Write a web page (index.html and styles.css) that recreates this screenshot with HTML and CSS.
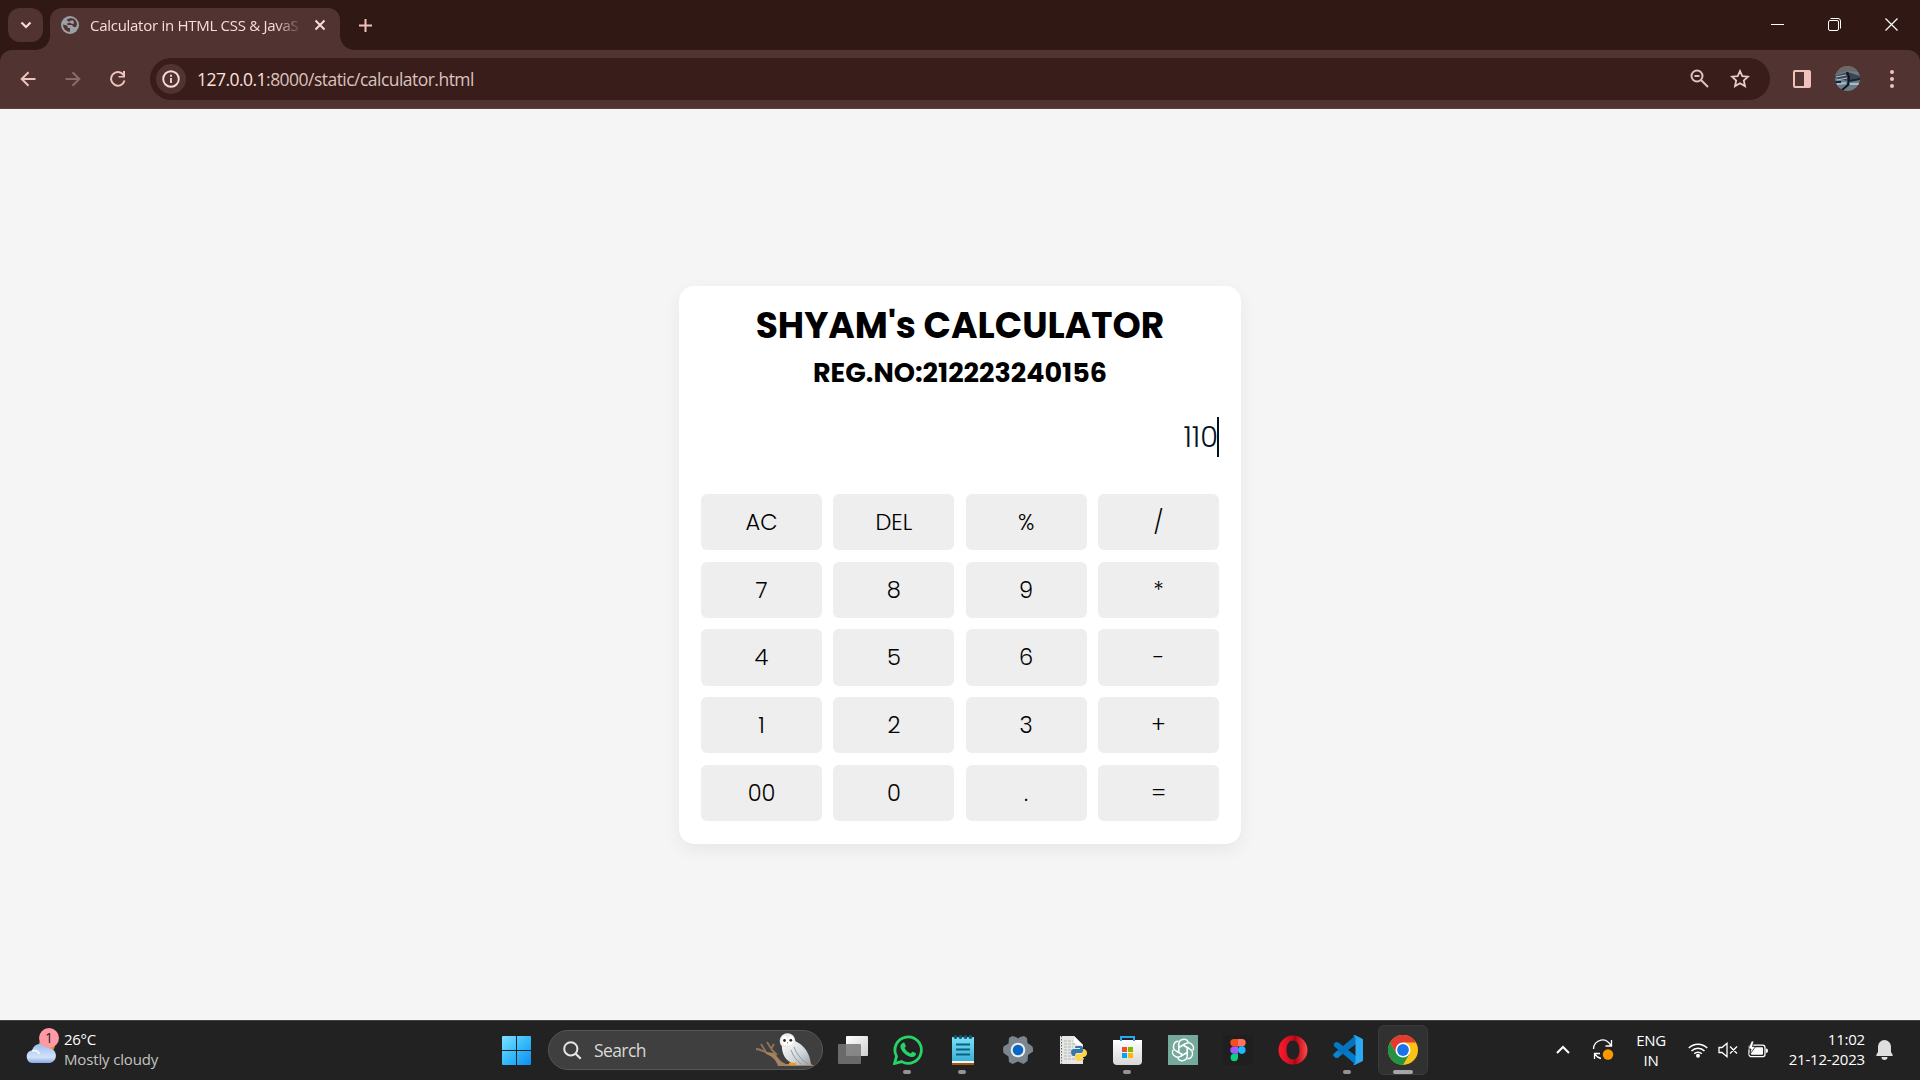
FILE: index.html
```html
<!DOCTYPE html>
<html lang="en">
<head>
<meta charset="utf-8">
<title>Calculator in HTML CSS &amp; JavaScript</title>
<link rel="stylesheet" href="styles.css">
</head>
<body>
<header class="browser">
  <div class="tabstrip">
    <div class="tab-search"><svg width="12" height="8" viewBox="0 0 12 8"><path d="M1.5 1.5 6 6l4.500-4.500" fill="none" stroke="#f8dcd8" stroke-width="2.200"/></svg></div>
    <div class="tab">
      <svg class="globe" width="18" height="18" viewBox="0 0 18 18"><circle cx="9" cy="9" r="9" fill="#9aa0a6"/><path d="M2 8.500 6 9.500 7 12 9 12v3.800C5 15.800 2 12.500 2 8.500ZM5.500 4C7 2.500 9.500 2 11.500 2.500L11 4.500 8.500 5v2L6 7.200 6.500 9h4.500l1.500 2H15l1-2.500C16 5 13.500 2.600 11.500 2.200L11 4l1.500 1 .5 2.500-2 .5" fill="#513431"/></svg>
      <span class="tab-title">Calculator in HTML CSS &amp; JavaS</span>
      <svg class="tab-close" width="12" height="12" viewBox="0 0 12 12"><path d="M1.500 1.500l9 9M10.500 1.500l-9 9" stroke="#f8dcd8" stroke-width="2"/></svg>
    </div>
    <svg class="new-tab" width="13" height="13" viewBox="0 0 13 13"><path d="M6.500 0v13M0 6.500h13" stroke="#efc2bc" stroke-width="2"/></svg>
    <div class="window-controls">
      <svg width="13" height="13" viewBox="0 0 13 13"><path d="M0 6.500h13" stroke="#fff"/></svg>
      <svg width="13" height="13" viewBox="0 0 13 13"><rect x=".5" y="2.500" width="10" height="10" rx="1.500" fill="none" stroke="#fff"/><path d="M2.500.5H10a2.500 2.500 0 0 1 2.500 2.500v7.500" fill="none" stroke="#fff"/></svg>
      <svg width="13" height="13" viewBox="0 0 13 13"><path d="M.5.5l12 12M12.500.5l-12 12" stroke="#fff" stroke-width="1.200"/></svg>
    </div>
  </div>
  <div class="toolbar">
    <nav class="nav">
      <svg width="16" height="16" viewBox="0 0 16 16"><path d="M15.500 8H2M8.500 1.200 1.700 8l6.800 6.800" fill="none" stroke="#efc2bc" stroke-width="2"/></svg>
      <svg width="16" height="16" viewBox="0 0 16 16"><path d="M.5 8H14M7.500 1.200 14.300 8l-6.800 6.800" fill="none" stroke="#8c6b67" stroke-width="2"/></svg>
      <svg width="16" height="16" viewBox="0 0 16 16"><path d="M14.500 9.500A6.800 6.800 0 1 1 13.500 4" fill="none" stroke="#efc2bc" stroke-width="2"/><path d="M15 0v6.500H8.500V5H13V0Z" fill="#efc2bc"/></svg>
    </nav>
    <div class="address">
      <div class="site-info"><svg width="18" height="18" viewBox="0 0 18 18"><circle cx="9" cy="9" r="7.800" fill="none" stroke="#f8dcd8" stroke-width="1.900"/><path d="M9 8v5M9 4.700v2" stroke="#f8dcd8" stroke-width="1.800"/></svg></div>
      <span class="url"><b>127.0.0.1</b>:8000/static/calculator.html</span>
      <svg class="zoom" width="19" height="19" viewBox="0 0 19 19"><circle cx="7" cy="7" r="5.500" fill="none" stroke="#dcc3bf" stroke-width="2"/><path d="M4.500 7h5M11 11l7 7" stroke="#dcc3bf" stroke-width="2"/></svg>
      <svg width="20" height="19" viewBox="0 0 20 19"><path d="M10 2l2.300 5.100 5.700.6-4.200 3.800 1.200 5.600-5-2.900-5 2.900 1.200-5.600L2 7.700l5.700-.6Z" fill="none" stroke="#e6ccc8" stroke-width="1.800"/></svg>
    </div>
    <svg class="panel" width="18" height="18" viewBox="0 0 18 18"><path fill-rule="evenodd" d="M2 0h14a2 2 0 0 1 2 2v14a2 2 0 0 1-2 2H2a2 2 0 0 1-2-2V2a2 2 0 0 1 2-2Zm0 2v14h9V2Z" fill="#efc2bc"/></svg>
    <svg class="avatar" width="25" height="25" viewBox="0 0 25 25"><defs><clipPath id="face"><circle cx="12.500" cy="12.500" r="12.500"/></clipPath></defs><g clip-path="url(#face)"><path fill="#6d7c89" d="M0 0h25v25H0z"/><path fill="#6b6865" d="M0 0h25v6L12 5 0 9z"/><path d="M0 10 13 6l12 4v3l-12 2-13-3Z" fill="#3b4652"/><path d="M1 11l10-2M2 14l10-2" stroke="#b4c2cd"/><path d="M12 6l2 5-1 8-6 5" fill="none" stroke="#0c1625" stroke-width="2"/><path d="M2 18l9-1M15 18h9" stroke="#a6bdca" stroke-width="2"/><path d="M14 15l11-2M0 16h6" stroke="#162330" stroke-width="2"/></g></svg>
    <svg width="4" height="18" viewBox="0 0 4 18"><g fill="#efc2bc"><circle cx="2" cy="2" r="2"/><circle cx="2" cy="9" r="2"/><circle cx="2" cy="16" r="2"/></g></svg>
  </div>
</header>

<main class="page">
  <section class="calculator">
    <h1>SHYAM's CALCULATOR</h1>
    <h2>REG.NO:212223240156</h2>
    <div class="display"><span class="value">110</span><span class="caret"></span></div>
    <div class="buttons">
      <button>AC</button><button>DEL</button><button>%</button><button>/</button>
      <button>7</button><button>8</button><button>9</button><button>*</button>
      <button>4</button><button>5</button><button>6</button><button>-</button>
      <button>1</button><button>2</button><button>3</button><button>+</button>
      <button>00</button><button>0</button><button>.</button><button>=</button>
    </div>
  </section>
</main>

<footer class="taskbar">
  <div class="weather">
    <svg width="36" height="38" viewBox="0 0 36 38"><defs><linearGradient id="cloud" x2="0" y2="1"><stop offset="0" stop-color="#9cbcf0"/><stop offset=".7" stop-color="#d3e2f9"/><stop offset="1" stop-color="#86a9e8"/></linearGradient></defs><circle cx="22" cy="18" r="8" fill="#f18a1b"/><path d="M7 36a6.500 6.500 0 0 1-1-12.500h1A9.500 9.500 0 0 1 24 21a7.600 7.600 0 0 1 1 15Z" fill="url(#cloud)"/><path d="M7 24c3-1 6 0 7.500 3" fill="none" stroke="#edf4ff" stroke-width="2"/><circle cx="24" cy="11" r="10" fill="#ff99a4"/></svg>
    <span class="badge">1</span>
    <div class="weather-text"><span class="temp">26°C</span><span class="sky">Mostly cloudy</span></div>
  </div>
  <div class="apps">
    <svg class="start" width="29" height="29" viewBox="0 0 29 29"><defs><linearGradient id="win" x2="1" y2="1"><stop offset="0" stop-color="#7fe0ff"/><stop offset=".5" stop-color="#36bbfb"/><stop offset="1" stop-color="#0d8df2"/></linearGradient></defs><path fill="url(#win)" d="M1 0h13v14H0V1a1 1 0 0 1 1-1ZM15 0h13a1 1 0 0 1 1 1v13H15ZM0 15h14v14H1a1 1 0 0 1-1-1ZM15 15h14v13a1 1 0 0 1-1 1H15Z"/></svg>
    <div class="search">
      <svg width="19" height="19" viewBox="0 0 19 19"><circle cx="7.800" cy="7.800" r="6.600" fill="none" stroke="#e5e5e5" stroke-width="2"/><path d="M12.700 12.700l5 5" stroke="#e5e5e5" stroke-width="2.300"/></svg>
      <span>Search</span>
      <svg class="owl" width="60" height="36" viewBox="0 0 60 36"><defs><linearGradient id="feather" x2="1" y2="1"><stop offset="0" stop-color="#fff"/><stop offset=".6" stop-color="#cfd5d8"/><stop offset="1" stop-color="#98a1a8"/></linearGradient></defs><path d="M1 17c5 0 8 3 13 5M6 12l5 8M12 10l5 8 5 5M19 12l-3 5" fill="none" stroke="#97755a" stroke-width="1.800"/><path d="M11 20l8 1c4 4 6 9 12 11l24-1 4 3H23c-2-6-6-10-12-12Z" fill="#a58360"/><path d="M27 12c-1 10 4 18 14 21h15C55 21 49 13 40 9Z" fill="url(#feather)"/><path d="M39 15c3 8 8 13 14 17M36 18c2 6 6 11 10 14" fill="none" stroke="#8b949b" stroke-width=".9"/><circle cx="32.500" cy="9" r="7.800" fill="#eeece9"/><path d="M32.500 13C27 14 25 8 28 4c3-1 4 1 4.500 3 1-3 3-4 5-3 3 5 0 10-5 9Z" fill="#fff"/><circle cx="29.500" cy="8.500" r="1.400" fill="#33251f"/><circle cx="35.800" cy="8.300" r="1.400" fill="#33251f"/><path d="M32 10l1 0-.5 2.500Z" fill="#9b785f"/><path d="M34 32h7" stroke="#f5941f" stroke-width="2.500"/></svg>
    </div>
    <div class="slot"><svg width="30" height="30" viewBox="0 0 30 30"><defs><linearGradient id="tv" x2="1" y2="1"><stop offset="0" stop-color="#fff"/><stop offset="1" stop-color="#cfcfcf"/></linearGradient></defs><rect x="8" y="1" width="22" height="20" rx="1" fill="url(#tv)"/><rect x="0" y="9" width="23" height="20" rx="1" fill="#777" fill-opacity=".85"/></svg></div>
    <div class="slot open"><svg width="30" height="30" viewBox="0 0 30 30"><path d="M1.500 28.500l2-7.200A13.200 13.200 0 1 1 8.700 26.600Z" fill="none" stroke="#25d366" stroke-width="2.800"/><path d="M10 7.800c.8-.4 1.500-.2 1.800.6l1 2.500c.2.700-.9 1.500-1.200 2 1.500 2.800 3.500 4.500 6 5.500.8-.4 1.500-2 2.200-1.700l2.800 1.400c.8.500.2 2.300-.8 3.200-2 1.600-5.500.6-8.800-1.600-3-2.100-5.400-5.400-5.600-8 0-1.700 1-3.200 2.600-3.900Z" fill="#25d366"/></svg></div>
    <div class="slot open"><svg width="22" height="30" viewBox="0 0 22 30"><defs><linearGradient id="note" x2="0" y2="1"><stop offset="0" stop-color="#7be0f6"/><stop offset="1" stop-color="#3bb2d6"/></linearGradient></defs><path fill="#a65410" d="M0 24h22v6H0z"/><path fill="#f3f3f3" d="M0 22h22v6H0z"/><path fill="url(#note)" d="M0 2h22v24H0z"/><g fill="#0c5773"><circle cx="3.500" cy="2" r="1.900"/><circle cx="8.500" cy="2" r="1.900"/><circle cx="13.500" cy="2" r="1.900"/><circle cx="18.500" cy="2" r="1.900"/></g><path d="M4 9.500h14M4 14.500h14M4 19.500h14" stroke="#0d5e80" stroke-width="2"/></svg></div>
    <div class="slot"><svg width="30" height="30" viewBox="0 0 30 30"><path d="M9 1l4 1 2 1.500L17 2l4-1 3 2 .5 5 5 3.500.5 2.500v2.500l-5 3.500-.5 6-4 3-5.500-2.500L9.500 29 6 27l-.5-5.500L.5 18 0 14l.5-2.500 5-3L6 3Z" fill="#7b858e"/><circle cx="15" cy="15" r="7.300" fill="#eceff1"/><circle cx="15" cy="15" r="5.300" fill="#0a66c2"/></svg></div>
    <div class="slot"><svg width="30" height="30" viewBox="0 0 30 30"><path d="M2 1h14l9 9v19H2Z" fill="#e6e6e4"/><path d="M16 1l9 9h-6l-3-3Z" fill="#fff"/><path d="M6 6h9M6 9h11M6 12h9M6 15h7M6 18h8M6 21h8M6 24h11" stroke="#b4b4b4" stroke-dasharray="3 1"/><path d="M3.500 1v28" stroke="#666" stroke-dasharray="1.500 1.500"/><path d="M18 11h5q2 0 2 2v3q0 2-2 2h-4q-2 0-2 3h-2q-2-1-2-4t3-3h6v-1h-5q0-2 1-2Z" fill="#3776ab"/><path d="M25 14h1q3 1 3 4t-3 4h-4v1h4q0 3-4 3t-5-3v-2q0-2 2-2h4q2 0 2-3Z" fill="#ffd343"/></svg></div>
    <div class="slot open"><svg width="30" height="30" viewBox="0 0 30 30"><defs><linearGradient id="bag" x2="0" y2="1"><stop offset="0" stop-color="#fff"/><stop offset="1" stop-color="#d7d7d7"/></linearGradient></defs><path d="M0 5h29v21q0 4-4 4H4q-4 0-4-4Z" fill="url(#bag)"/><path d="M8 6V2h13v4" fill="none" stroke="#27a9ea" stroke-width="2"/><path fill="#f25022" d="M9 12h5v5H9z"/><path fill="#7fba00" d="M15 12h5v5h-5z"/><path fill="#00a4ef" d="M9 18h5v5H9z"/><path fill="#ffb900" d="M15 18h5v5h-5z"/></svg></div>
    <div class="slot"><svg width="30" height="30" viewBox="0 0 30 30"><path fill="#74a99b" d="M0 0h30v30H0z"/><g transform="translate(15 15)" fill="none" stroke="#fff" stroke-width="1.400"><path id="petal" d="M-4.300 2.500V-5.500C-4.300-11 3-12.500 5.300-8.200M-4.300-2.500 2.500-6.500"/><use href="#petal" transform="rotate(60)"/><use href="#petal" transform="rotate(120)"/><use href="#petal" transform="rotate(180)"/><use href="#petal" transform="rotate(240)"/><use href="#petal" transform="rotate(300)"/></g></svg></div>
    <div class="slot"><svg width="30" height="30" viewBox="0 0 30 30"><path fill="#1f1f1f" d="M0 0h30v30H0z"/><path d="M15 4h-4a3.700 3.700 0 0 0 0 7.400h4Z" fill="#f24e1e"/><path d="M15 4h4a3.700 3.700 0 0 1 0 7.400h-4Z" fill="#ff7262"/><path d="M15 11.400h-4a3.700 3.700 0 0 0 0 7.400h4Z" fill="#a259ff"/><circle cx="18.800" cy="15.100" r="3.800" fill="#1abcfe"/><path d="M15 18.800h-4a3.700 3.700 0 1 0 4 3.700Z" fill="#0acf83"/></svg></div>
    <div class="slot"><svg width="30" height="30" viewBox="0 0 30 30"><defs><linearGradient id="opera" x2="1"><stop offset="0" stop-color="#ff1b2d"/><stop offset=".5" stop-color="#c30d1e"/><stop offset=".55" stop-color="#b00010"/><stop offset="1" stop-color="#ff4a4a"/></linearGradient></defs><path fill-rule="evenodd" d="M15 .5a14.500 14.500 0 1 1 0 29 14.500 14.500 0 0 1 0-29Zm0 5c-4.500 0-6.500 4.500-6.500 9.500s2 9.500 6.500 9.500 6.500-4.500 6.500-9.500-2-9.500-6.500-9.500Z" fill="url(#opera)"/></svg></div>
    <div class="slot open"><svg width="30" height="30" viewBox="0 0 30 30"><path d="M1 8.500 3 7l2 .2L23 21v9L.8 11Z" fill="#007acc"/><path d="M23 0v9L5 22.800 3 23l-2.300-1.700V19Z" fill="#0873bb"/><path d="M0 19.500 4.500 15.500 8 18.500 5 22.800H3L.7 21Z" fill="#0b83d1"/><path d="M21.500 0 29 3.500q1 .5 1 1.500v20q0 1-1 1.500L21.500 30 20 29q2.500 0 2.500-2V3q0-2-2.500-2Z" fill="#2aaaf0"/></svg></div>
    <div class="slot active"><svg width="30" height="30" viewBox="0 0 30 30"><circle cx="15" cy="15" r="15" fill="#fbc116"/><path d="M2 7.500A15 15 0 0 1 28 7.500H15L8.500 18.800Z" fill="#e33b2e"/><path d="M2 7.500A15 15 0 0 0 15 30l6.500-11.300L8.500 18.800Z" fill="#229342"/><circle cx="15" cy="15" r="7.500" fill="#fff"/><circle cx="15" cy="15" r="5.900" fill="#1a73e8"/></svg></div>
  </div>
  <div class="tray">
    <svg class="chevron" width="14" height="9" viewBox="0 0 14 9"><path d="M1 8l6-6 6 6" fill="none" stroke="#fff" stroke-width="2"/></svg>
    <svg class="update" width="22" height="22" viewBox="0 0 22 22"><g fill="none" stroke="#fff" stroke-width="1.300"><path d="M1.500 10a9 9 0 0 1 17.500-3M19.500 1v6h-6M9 19.500a9 9 0 0 1-6-4.500M8 14.500H2.500V20"/></g><circle cx="16" cy="15.500" r="5.200" fill="#ff9800"/></svg>
    <div class="lang"><span>ENG</span><span>IN</span></div>
    <div class="status">
      <svg width="20" height="16" viewBox="0 0 20 16"><g fill="none" stroke="#fff" stroke-width="1.500"><path d="M.8 6a13 13 0 0 1 18.400 0M3.500 9a9 9 0 0 1 13 0M6.200 11.800a5.300 5.300 0 0 1 7.600 0"/></g><circle cx="10" cy="13.800" r="2" fill="#fff"/></svg>
      <svg width="20" height="16" viewBox="0 0 20 16"><path d="M1 5.500h3L9 1.300v13.400L4 10.500H1ZM12 4.500l7 7M19 4.500l-7 7" fill="none" stroke="#fff" stroke-width="1.300"/></svg>
      <svg width="20" height="18" viewBox="0 0 20 18"><rect x="1" y="4.200" width="16" height="11.500" rx="2.500" fill="none" stroke="#fff" stroke-width="1.300"/><path d="M18 7.500q2 0 2 2.200T18 12Z" fill="#fff"/><rect x="3" y="6.200" width="12" height="7.500" rx="1" fill="#fff"/><path d="M3.500 0 0 8h3L1.800 13.500 7.500 5.500H4.500L6 0Z" fill="#fff" stroke="#222" stroke-width=".8"/></svg>
    </div>
    <div class="clock"><span>11:02</span><span>21-12-2023</span></div>
    <svg class="bell" width="17" height="20" viewBox="0 0 17 20"><path d="M8.500 0a6.500 6.500 0 0 1 6.500 6.500V12l1.800 3q.3 1-1 1H1.200q-1.300 0-1-1L2 12V6.500A6.500 6.500 0 0 1 8.500 0ZM5.500 17h6a3 3 0 0 1-6 0Z" fill="#dedede"/></svg>
  </div>
</footer>
</body>
</html>
```
FILE: styles.css
```css
* { box-sizing: border-box; margin: 0; padding: 0; }
body {
  width: 1920px; height: 1080px; overflow: hidden;
  display: flex; flex-direction: column;
  background: #f5f5f5;
  font-family: "Segoe UI", "Open Sans", "Noto Sans", sans-serif;
}
svg { display: block; flex: none; }

/* browser window */
.browser { height: 109px; background: #301915; flex: none; }
.tabstrip { height: 50px; display: flex; align-items: center; padding-left: 8px; }
.tab-search {
  width: 35px; height: 34px; border-radius: 12px; background: #513431;
  display: flex; align-items: center; justify-content: center;
}
.tab {
  position: relative; width: 290px; height: 42px; margin-left: 7px; align-self: flex-end;
  padding: 0 14px 8px 11px; display: flex; align-items: center;
  background: #513431; border-radius: 12px 12px 0 0;
}
.tab::before, .tab::after {
  content: ""; position: absolute; bottom: 0; width: 14px; height: 14px;
}
.tab::before { left: -14px; background: radial-gradient(circle at 0 0, transparent 13.500px, #513431 14px); }
.tab::after { right: -14px; background: radial-gradient(circle at 100% 0, transparent 13.500px, #513431 14px); }
.tab-title {
  width: 214px; margin-left: 11px; white-space: nowrap;
  font-size: 15px; line-height: 24px; letter-spacing: -0.28px; color: #f8dcd8;
  -webkit-mask-image: linear-gradient(90deg, #000 185px, transparent 213px);
  mask-image: linear-gradient(90deg, #000 185px, transparent 213px);
}
.tab-close { margin-left: auto; }
.new-tab { margin-left: 19px; }
.window-controls { margin-left: auto; margin-right: 22px; padding-bottom: 1px; display: flex; gap: 44px; }
.toolbar {
  height: 59px; padding: 0 25px 1px 20px; display: flex; align-items: center;
  background: #513431; border-bottom: 1px solid #5b403c; border-radius: 12px 12px 0 0;
}
.nav { display: flex; gap: 29px; width: 130px; }
.address {
  width: 1620px; height: 42px; padding: 0 20px 0 6px; border-radius: 21px;
  display: flex; align-items: center; background: #381d1a;
}
.site-info {
  width: 30px; height: 30px; border-radius: 50%; background: #513431;
  display: flex; align-items: center; justify-content: center;
}
.url { margin-left: 11px; font-size: 17.5px; letter-spacing: -0.53px; color: #dcc3bf; }
.url b { font-weight: 400; color: #fde2de; }
.zoom { margin-left: auto; margin-right: 21px; }
.panel { margin-left: 23px; margin-right: 24px; }
.avatar { margin-right: 30px; }

/* calculator */
.page { height: 911px; display: flex; justify-content: center; padding-top: 177px; flex: none; }
.calculator {
  width: 562px; height: 558px; padding: 13px 22px 22px;
  background: #fff; border-radius: 15px; box-shadow: 0 6px 18px rgba(0, 0, 0, 0.06);
  font-family: Poppins, Inter, sans-serif; color: #000;
}
.calculator h1 { text-align: center; font-size: 36px; line-height: 54px; font-weight: 700; white-space: nowrap; }
.calculator h2 { text-align: center; font-size: 27px; line-height: 39px; font-weight: 700; white-space: nowrap; }
.display { height: 90px; margin-bottom: 12px; display: flex; align-items: center; justify-content: flex-end; }
.value { font-size: 28.8px; font-weight: 300; color: #02131f; padding-top: 1px; }
.caret { width: 2px; height: 40px; margin-left: -1px; background: #02131f; }
.buttons { display: grid; grid-template-columns: repeat(4, 1fr); grid-auto-rows: 56.3px; gap: 11.4px 11.3px; }
.buttons button {
  border: 0; border-radius: 6px; background: #eee; color: #000;
  font: 300 22.5px/1 Poppins, Inter, sans-serif;
}

/* taskbar */
.taskbar {
  height: 60px; display: grid; grid-template-columns: 502px 1fr auto;
  background: #222; border-top: 1px solid #414241; color: #fff; font-size: 15px; flex: none;
}
.weather { position: relative; display: flex; padding: 6px 0 0 25px; }
.badge { position: absolute; left: 39px; top: 7px; width: 20px; line-height: 20px; text-align: center; font-size: 14px; color: #222; }
.weather-text { display: flex; flex-direction: column; margin-left: 3px; line-height: 20px; padding-top: 2px; }
.temp { letter-spacing: -0.3px; }
.sky { color: #c4c4c4; letter-spacing: -0.15px; }
.apps { display: flex; align-items: center; padding-bottom: 1px; }
.search {
  width: 275px; height: 40px; margin: 0 2px 0 17px; padding: 0 7px 0 14px;
  display: flex; align-items: center; border-radius: 20px;
  background: #3f3f3f; border: 1px solid #565656; color: #d8d8d8;
}
.search span { margin-left: 12px; font-size: 17.5px; letter-spacing: -0.6px; padding-bottom: 1px; }
.owl { margin-left: auto; }
.slot { position: relative; width: 55px; height: 50px; display: flex; align-items: center; justify-content: center; }
.open::after, .active::after {
  content: ""; position: absolute; bottom: 1px; left: 23px; width: 8px; height: 4px; border-radius: 2px; background: #949494;
}
.active { width: 50px; margin-left: 3px; background: #313131; border: 1px solid #3b3b3b; border-radius: 6px; }
.active::after { left: 14px; bottom: 0; width: 20px; background: #a6a6a6; }
.tray { display: flex; align-items: center; padding: 0 27px 2px 0; }
.chevron { margin-right: 22px; }
.update { margin-right: 22px; }
.lang, .clock { display: flex; flex-direction: column; line-height: 20px; }
.lang { width: 30px; align-items: center; margin-right: 22px; }
.lang span { letter-spacing: -0.3px; }
.status { display: flex; align-items: center; gap: 10px; }
.clock { width: 78px; align-items: flex-end; margin: 0 11px 0 19px; padding-bottom: 2px; letter-spacing: -0.2px; white-space: nowrap; }
```
